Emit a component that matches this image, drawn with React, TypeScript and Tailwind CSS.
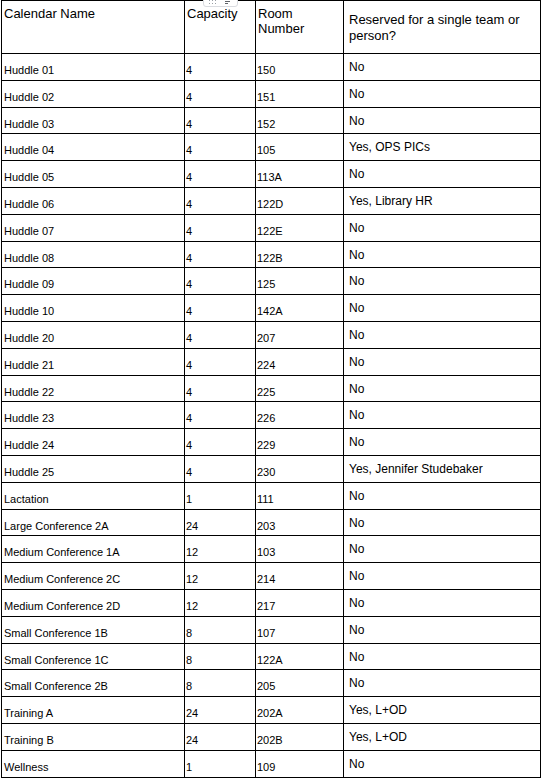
import React from "react";

const rows: [string, string, string, string][] = [
  ["Huddle 01", "4", "150", "No"],
  ["Huddle 02", "4", "151", "No"],
  ["Huddle 03", "4", "152", "No"],
  ["Huddle 04", "4", "105", "Yes, OPS PICs"],
  ["Huddle 05", "4", "113A", "No"],
  ["Huddle 06", "4", "122D", "Yes, Library HR"],
  ["Huddle 07", "4", "122E", "No"],
  ["Huddle 08", "4", "122B", "No"],
  ["Huddle 09", "4", "125", "No"],
  ["Huddle 10", "4", "142A", "No"],
  ["Huddle 20", "4", "207", "No"],
  ["Huddle 21", "4", "224", "No"],
  ["Huddle 22", "4", "225", "No"],
  ["Huddle 23", "4", "226", "No"],
  ["Huddle 24", "4", "229", "No"],
  ["Huddle 25", "4", "230", "Yes, Jennifer Studebaker"],
  ["Lactation", "1", "111", "No"],
  ["Large Conference 2A", "24", "203", "No"],
  ["Medium Conference 1A", "12", "103", "No"],
  ["Medium Conference 2C", "12", "214", "No"],
  ["Medium Conference 2D", "12", "217", "No"],
  ["Small Conference 1B", "8", "107", "No"],
  ["Small Conference 1C", "8", "122A", "No"],
  ["Small Conference 2B", "8", "205", "No"],
  ["Training A", "24", "202A", "Yes, L+OD"],
  ["Training B", "24", "202B", "Yes, L+OD"],
  ["Wellness", "1", "109", "No"],
];

export default function App() {
  return (
    <div
      className="relative w-[543px] h-[781px] bg-white text-black"
      style={{ fontFamily: '"Liberation Sans", Arial, sans-serif' }}
    >
      <div className="ml-[1px] grid grid-cols-[183px_71px_88px_197px] grid-rows-[53px_repeat(27,26.8px)] border-l border-t border-black w-[540px]">
        <div className="border-r border-b border-black pl-[2px] pt-[5px] text-[13px] leading-[15px]">Calendar Name</div>
        <div className="border-r border-b border-black pl-[2px] pt-[5px] text-[13px] leading-[15px]">Capacity</div>
        <div className="border-r border-b border-black pl-[2px] pt-[5px] text-[13px] leading-[15px]">
          Room
          <br />
          Number
        </div>
        <div className="border-r border-b border-black pl-[5px] pt-[11px] text-[13px] leading-[16px]">
          Reserved for a single team or
          <br />
          person?
        </div>
        {rows.map((r, i) => (
          <React.Fragment key={i}>
            <div className="border-r border-b border-black pl-[2px] pt-[10px] text-[11px] leading-[13px] whitespace-nowrap">{r[0]}</div>
            <div className="border-r border-b border-black pl-[1px] pt-[10px] text-[11px] leading-[13px]">{r[1]}</div>
            <div className="border-r border-b border-black pl-[1px] pt-[10px] text-[11px] leading-[13px]">{r[2]}</div>
            <div className="border-r border-b border-black pl-[5px] pt-[6px] text-[12px] leading-[14px]">{r[3]}</div>
          </React.Fragment>
        ))}
      </div>
      <div className="absolute left-[203px] top-[-4px] w-[35px] h-[11px] rounded-[3px] border border-[#dadce0] bg-white flex items-center justify-between pl-[5px] pr-[5px]">
        <svg width="7" height="4" viewBox="0 0 7 4">
          <g fill="#9aa0a6">
            <rect x="0" y="0" width="1" height="1" />
            <rect x="3" y="0" width="1" height="1" />
            <rect x="6" y="0" width="1" height="1" />
            <rect x="0" y="3" width="1" height="1" />
            <rect x="3" y="3" width="1" height="1" />
            <rect x="6" y="3" width="1" height="1" />
          </g>
        </svg>
        <svg width="7" height="5" viewBox="0 0 7 5">
          <g fill="#5f6368">
            <rect x="0" y="0" width="7" height="1" />
            <rect x="0" y="2" width="5" height="1" />
            <rect x="0" y="4" width="3" height="1" />
          </g>
        </svg>
      </div>
    </div>
  );
}
